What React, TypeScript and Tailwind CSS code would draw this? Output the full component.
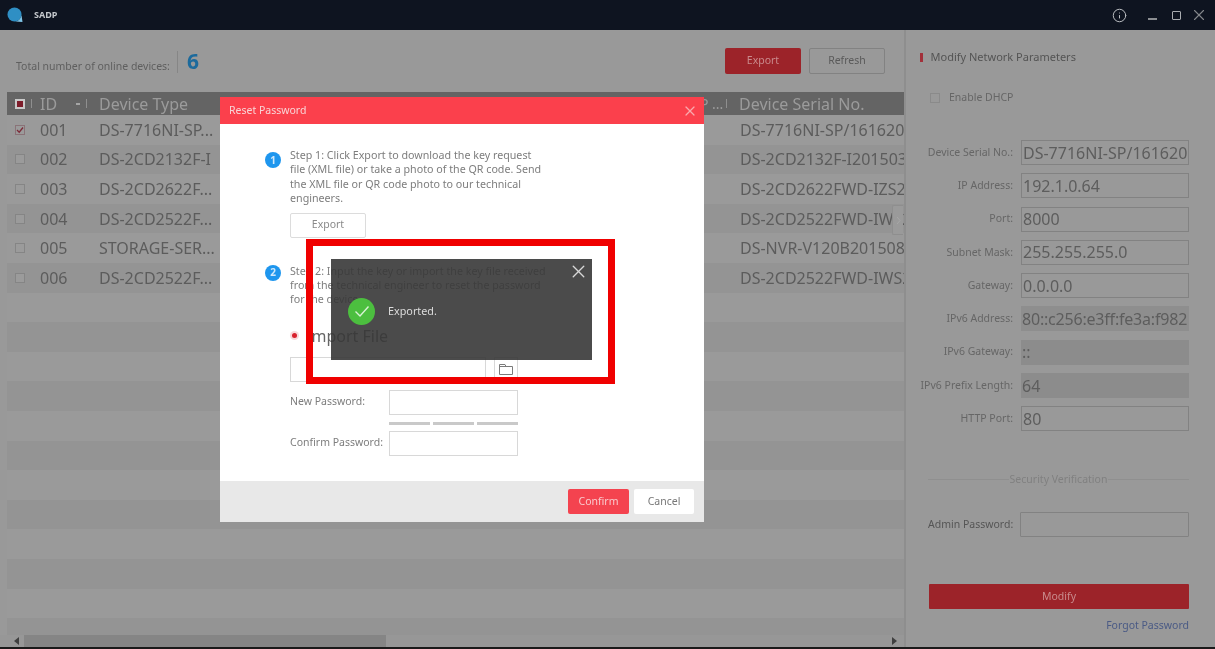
import { Info, X } from "lucide-react";

const DEVICES = [
  { id: "001", type: "DS-7716NI-SP...", serial: "DS-7716NI-SP/16162016", checked: true },
  { id: "002", type: "DS-2CD2132F-I", serial: "DS-2CD2132F-I20150320" },
  { id: "003", type: "DS-2CD2622F...", serial: "DS-2CD2622FWD-IZS201" },
  { id: "004", type: "DS-2CD2522F...", serial: "DS-2CD2522FWD-IWS20" },
  { id: "005", type: "STORAGE-SER...", serial: "DS-NVR-V120B2015080" },
  { id: "006", type: "DS-2CD2522F...", serial: "DS-2CD2522FWD-IWS20" },
];

const FIELDS = [
  { label: "Device Serial No.:", value: "DS-7716NI-SP/16162016", cls: "border border-[#828282]" },
  { label: "IP Address:", value: "192.1.0.64", cls: "border border-[#828282]" },
  { label: "Port:", value: "8000", cls: "border border-[#828282]" },
  { label: "Subnet Mask:", value: "255.255.255.0", cls: "border border-[#828282]" },
  { label: "Gateway:", value: "0.0.0.0", cls: "border border-[#828282]" },
  { label: "IPv6 Address:", value: "80::c256:e3ff:fe3a:f982", cls: "bg-[#8e8e8e] tracking-[-0.2px]" },
  { label: "IPv6 Gateway:", value: "::", cls: "bg-[#8c8c8c]" },
  { label: "IPv6 Prefix Length:", value: "64", cls: "bg-[#8c8c8c]" },
  { label: "HTTP Port:", value: "80", cls: "border border-[#828282]" },
];

function TitleBar() {
  return (
    <div className="flex h-[30px] shrink-0 items-center bg-[#0e1420] pl-[7px] pr-[7px]">
      <svg width="16" height="16" viewBox="0 0 16 16">
        <circle cx="7.5" cy="7.5" r="7" fill="#2f8fc4" />
        <path d="M8 14.5 A7 7 0 0 0 14.5 8 L15.5 15 Z" fill="#7fc4e6" />
      </svg>
      <span className="ml-[11px] text-[9px] font-bold text-[#c4c8cc]">SADP</span>
      <div className="ml-auto flex items-center text-[#b9bcc0]">
        <Info size={15} strokeWidth={1.6} />
        <div className="ml-[21px] mt-[8px] h-[1.5px] w-[9px] bg-[#8b8e92]" />
        <div className="ml-[15px] h-[9px] w-[9px] rounded-[1px] border-[1.5px] border-[#a9acb0]" />
        <X size={18} strokeWidth={1.5} className="ml-[9.5px] text-[#85888c]" />
      </div>
    </div>
  );
}

function DeviceTable() {
  const stripes = Array.from({ length: 18 }, (_, i) => i);
  return (
    <div className="ml-[7px] flex min-h-0 flex-1 flex-col overflow-hidden">
      <div className="flex h-[23px] shrink-0 items-center whitespace-nowrap bg-[#646464] text-[16px] text-[#9b9b9b]">
        <div className="flex w-[24px] justify-center pl-[1px]">
          <div className="flex h-[10px] w-[10px] items-center justify-center bg-[#c9c9c9]">
            <div className="h-[6px] w-[6px] bg-[#7d1c2a]" />
          </div>
        </div>
        <div className="h-[9px] w-px bg-[#8f8f8f]" />
        <span className="ml-[8px] w-[36px]">ID</span>
        <div className="h-[2px] w-[4px] bg-[#a5a5a5]" />
        <div className="ml-[6px] h-[9px] w-px bg-[#8f8f8f]" />
        <span className="ml-[7px] w-[606px] pl-[5px]">Device Type</span>
        <span className="w-[26px] text-[14px]">P ...</span>
        <div className="h-[9px] w-px bg-[#8f8f8f]" />
        <span className="ml-[12px]">Device Serial No.</span>
      </div>
      <div className="flex-1 overflow-hidden">
        {stripes.map((i) => {
          const d = DEVICES[i];
          return (
            <div
              key={i}
              className={"flex h-[29.6px] items-center whitespace-nowrap text-[16px] text-[#5c5c5c] " + (i % 2 ? "bg-[#949494]" : "bg-[#9a9a9a]")}
            >
              {d && (
                <>
                  <div className="flex w-[33px] justify-center pr-[8px]">
                    <div className={"flex h-[10px] w-[10px] items-center justify-center border bg-[#9b9b9b] " + (d.checked ? "border-[#8a7378]" : "border-[#858585]")}>
                      {d.checked && (
                        <svg width="8" height="8" viewBox="0 0 8 8" fill="none">
                          <path d="M1 4 L3.2 6.2 L7 1.5" stroke="#7d2a38" strokeWidth="1.3" />
                        </svg>
                      )}
                    </div>
                  </div>
                  <span className="w-[59px]">{d.id}</span>
                  <span className="w-[641px]">{d.type}</span>
                  <span className="w-[164px] overflow-hidden">{d.serial}</span>
                </>
              )}
            </div>
          );
        })}
      </div>
    </div>
  );
}

function MainPane() {
  return (
    <div className="relative flex w-[904px] shrink-0 flex-col">
      <div className="flex h-[62px] shrink-0 items-center pl-[16px] pr-[19px]">
        <span className="mt-[11px] text-[10.5px] text-[#5f5f5f]">Total number of online devices:</span>
        <div className="ml-[7px] mt-[2px] h-[22px] w-px bg-[#868686]" />
        <span className="ml-[9px] text-[21px] font-bold leading-none text-[#1c6a9c]">6</span>
        <button className="ml-auto h-[26px] w-[76px] rounded-[2px] bg-[#9c2329] text-[10.5px] text-[#c98a8c]">Export</button>
        <button className="ml-[8px] h-[26px] w-[76px] rounded-[2px] border border-[#828282] text-[10.5px] text-[#5a5a5a]">Refresh</button>
      </div>
      <DeviceTable />
      <div className="flex h-[12px] shrink-0 items-center bg-[#979797] pl-[14px] pr-[7px]">
        <div className="h-0 w-0 border-y-[4px] border-r-[5px] border-y-transparent border-r-[#3f3f3f]" />
        <div className="ml-[5px] h-full w-[362px] bg-[#858585]" />
        <div className="ml-auto h-0 w-0 border-y-[4px] border-l-[5px] border-y-transparent border-l-[#3f3f3f]" />
      </div>
      <div className="absolute left-[892px] top-[175px] flex h-[30px] w-[11px] items-center justify-center rounded-l-[2px] border border-r-0 border-[#8e8e8e] bg-[#9a9a9a]">
        <svg width="5" height="9" viewBox="0 0 5 9" fill="none">
          <path d="M1 1 L4 4.5 L1 8" stroke="#a8a8a8" strokeWidth="1" />
        </svg>
      </div>
    </div>
  );
}

function SidePane() {
  return (
    <div className="flex flex-1 flex-col border-l-2 border-[#8e8e8e] bg-[#999999] pt-[19px] text-[10.5px] text-[#666666]">
      <div className="ml-[14px] flex h-[16px] items-center">
        <div className="h-[9px] w-[2.5px] bg-[#a2303a]" />
        <span className="ml-[8px] text-[11px] text-[#545454]">Modify Network Parameters</span>
      </div>
      <div className="ml-[24px] mt-[26px] flex h-[14px] items-center">
        <div className="h-[10px] w-[10px] border border-[#8a8a8a]" />
        <span className="ml-[9px]">Enable DHCP</span>
      </div>
      <div className="mt-[35px] flex flex-col gap-[8.3px]">
        {FIELDS.map((f) => (
          <div key={f.label} className="flex items-center">
            <span className="w-[107px] whitespace-nowrap text-right">{f.label}</span>
            <div className={"ml-[8px] flex h-[25px] w-[168px] items-center overflow-hidden whitespace-nowrap pl-[1px] text-[16px] text-[#5d5d5d] " + f.cls}>
              {f.value}
            </div>
          </div>
        ))}
      </div>
      <div className="ml-[22px] mr-[26px] mt-[41px] flex h-[14px] items-center">
        <div className="h-px flex-1 bg-[#8f8f8f]" />
        <span className="whitespace-nowrap px-[1px] text-[#808080]">Security Verification</span>
        <div className="h-px flex-1 bg-[#8f8f8f]" />
      </div>
      <div className="ml-[22px] mr-[26px] mt-[26px] flex items-center justify-between">
        <span className="whitespace-nowrap text-[#555555]">Admin Password:</span>
        <div className="h-[25px] w-[169px] rounded-[1px] border border-[#828282]" />
      </div>
      <button className="ml-[23px] mt-[47px] h-[25px] w-[260px] rounded-[1px] bg-[#9c2329] text-[10.5px] text-[#c98a8c]">Modify</button>
      <a className="mr-[26px] mt-[9px] text-right text-[10.5px] text-[#4a5a85]">Forgot Password</a>
    </div>
  );
}

function StepBadge({ n, cls }: { n: number; cls: string }) {
  return (
    <div className={"flex h-[16px] w-[16px] shrink-0 items-center justify-center rounded-full bg-[#1e96ee] text-[10px] font-bold text-[#cfe8fb] " + cls}>
      {n}
    </div>
  );
}

function ResetDialog() {
  const input = "h-[25px] border border-[#d8d8d8] bg-white";
  return (
    <div className="absolute left-[220px] top-[97px] flex h-[425px] w-[484px] flex-col bg-white text-[10.5px] text-[#7d7d7d]">
      <div className="flex h-[27px] shrink-0 items-center justify-between bg-[#fb404c] pl-[9px] pr-[6px] text-[#f8d4d6]">
        <span>Reset Password</span>
        <X size={16} strokeWidth={1.8} className="text-[#f9a9ae]" />
      </div>
      <div className="flex flex-1 flex-col pl-[45px] pt-[24px]">
        <div className="flex gap-[9px]">
          <StepBadge n={1} cls="mt-[4px]" />
          <p className="whitespace-nowrap text-[10.7px] leading-[14.4px]">
            Step 1: Click Export to download the key request
            <br />
            file (XML file) or take a photo of the QR code. Send
            <br />
            the XML file or QR code photo to our technical
            <br />
            engineers.
          </p>
        </div>
        <button className="ml-[25px] mt-[7px] h-[25px] w-[76px] rounded-[2px] border border-[#dcdcdc] text-[#8a8a8a]">Export</button>
        <div className="mt-[26px] flex gap-[9px]">
          <StepBadge n={2} cls="mt-[1px]" />
          <p className="whitespace-nowrap text-[10.7px] leading-[14.4px]">
            Step 2: Input the key or import the key file received
            <br />
            from the technical engineer to reset the password
            <br />
            for the device.
          </p>
        </div>
        <div className="ml-[27px] mt-[17px] flex h-[24px] items-center">
          <div className="h-[5px] w-[5px] rounded-full bg-[#d8202c] ring-[2px] ring-[#f8d8da]" />
          <span className="ml-[9px] text-[16px] text-[#666666]">Import File</span>
        </div>
        <div className="ml-[25px] mt-[9px] flex gap-[8px]">
          <div className={input + " w-[196px]"} />
          <div className={input + " flex w-[24px] items-center justify-center"}>
            <svg width="14" height="11" viewBox="0 0 14 11" fill="none" stroke="#7a7a7a" strokeWidth="1">
              <path d="M0.5 10.5 V0.5 H6 L7 2.5 H13.5 V10.5 Z M0.5 2.5 H7" />
            </svg>
          </div>
        </div>
        <div className="ml-[25px] mt-[8px] flex items-center">
          <span className="w-[99px]">New Password:</span>
          <div className={input + " w-[129px]"} />
        </div>
        <div className="ml-[124px] mt-[7px] flex w-[129px] gap-[3px]">
          <div className="h-[3px] flex-1 bg-[#c9c9c9]" />
          <div className="h-[3px] flex-1 bg-[#c9c9c9]" />
          <div className="h-[3px] flex-1 bg-[#c9c9c9]" />
        </div>
        <div className="ml-[25px] mt-[6px] flex items-center">
          <span className="w-[99px] whitespace-nowrap">Confirm Password:</span>
          <div className={input + " w-[129px]"} />
        </div>
      </div>
      <div className="flex h-[41px] shrink-0 items-center justify-end gap-[5px] bg-[#e8e8e8] pr-[10px]">
        <button className="h-[25px] w-[61px] rounded-[2px] bg-[#f4434f] text-[#f9c9cc]">Confirm</button>
        <button className="h-[25px] w-[60px] rounded-[2px] bg-white text-[#777777]">Cancel</button>
      </div>
    </div>
  );
}

function ExportToast() {
  return (
    <div className="absolute left-[331px] top-[259px] h-[101px] w-[261px] bg-[#373737]/90">
      <div className="flex justify-end pr-[3.5px] pt-[1.5px] text-[#d8d8d8]">
        <X size={21} strokeWidth={1.6} />
      </div>
      <div className="ml-[17px] mt-[16px] flex items-center">
        <div className="flex h-[27px] w-[27px] items-center justify-center rounded-full bg-[#4cbf3f]">
          <svg width="16" height="13" viewBox="0 0 16 13" fill="none">
            <path d="M1.5 6.5 L6 11 L14.5 1.5" stroke="#d9f2d5" strokeWidth="1.4" />
          </svg>
        </div>
        <span className="ml-[13px] mt-[1px] text-[10.8px] text-[#dcdcdc]">Exported.</span>
      </div>
    </div>
  );
}

export default function App() {
  return (
    <div
      className="relative flex h-[649px] w-[1215px] flex-col overflow-hidden bg-[#999999] blur-[0.5px]"
      style={{ fontFamily: '"Noto Sans", "Open Sans", sans-serif' }}
    >
      <TitleBar />
      <div className="flex min-h-0 flex-1">
        <MainPane />
        <SidePane />
      </div>
      <div className="h-[2px] shrink-0 bg-[#1a1a1a]" />
      <ResetDialog />
      <ExportToast />
      <div className="absolute left-[306px] top-[239px] h-[145px] w-[309px] border-[7px] border-[#f00000]" />
    </div>
  );
}
